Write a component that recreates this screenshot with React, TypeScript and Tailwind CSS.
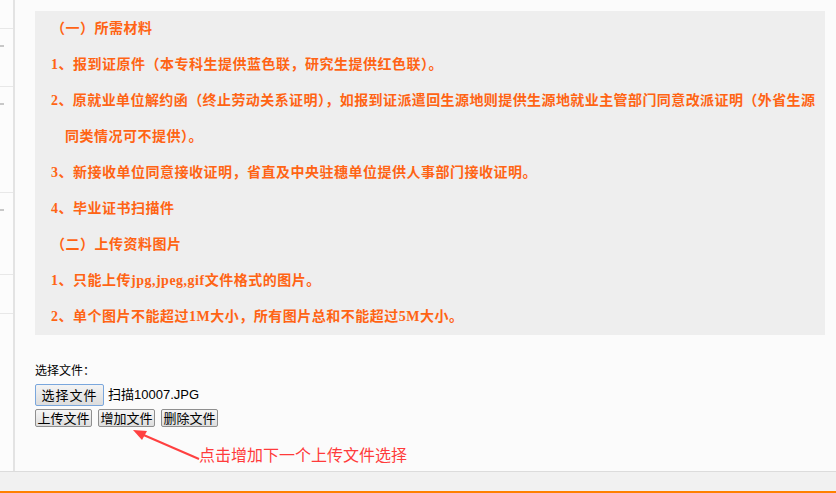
import React from 'react';

const sideRows = [
  { h: 'h-[29px]', tick: false },
  { h: 'h-[58px]', tick: true },
  { h: 'h-[106px]', tick: true },
  { h: 'h-[82px]', tick: true },
  { h: 'h-[39px]', tick: false },
];

// item 2 wraps onto a second line in the original layout
const notes: { text: string; cont?: string; heading?: boolean }[] = [
  { text: '（一）所需材料', heading: true },
  { text: '1、报到证原件（本专科生提供蓝色联，研究生提供红色联）。' },
  {
    text: '2、原就业单位解约函（终止劳动关系证明），如报到证派遣回生源地则提供生源地就业主管部门同意改派证明（外省生源',
    cont: '同类情况可不提供）。',
  },
  { text: '3、新接收单位同意接收证明，省直及中央驻穗单位提供人事部门接收证明。' },
  { text: '4、毕业证书扫描件' },
  { text: '（二）上传资料图片', heading: true },
  { text: '1、只能上传jpg,jpeg,gif文件格式的图片。' },
  { text: '2、单个图片不能超过1M大小，所有图片总和不能超过5M大小。' },
];

const Btn = ({ children }: { children: React.ReactNode }) => (
  <button
    type="button"
    className="h-[18px] w-[57px] border border-[#8f8f8f] rounded-[2px] bg-gradient-to-b from-[#f6f6f6] to-[#dedede] text-[13px] leading-[16px] text-black"
  >
    {children}
  </button>
);

export default function App() {
  return (
    <div className="w-[836px] h-[493px] flex flex-col bg-[#fbfbfb] overflow-hidden [font-family:'Noto_Sans_CJK_SC',sans-serif]">
      <div className="flex flex-1 min-h-0">
        <aside className="w-[15px] shrink-0 bg-[#fcfcfc] border-r-2 border-[#e3e3e3]">
          {sideRows.map((r, i) => (
            <div key={i} className={`${r.h} border-b border-[#e8e8e8] pt-[16px]`}>
              {r.tick && <div className="w-[4px] h-[2px] bg-[#c8c8c8]" />}
            </div>
          ))}
        </aside>

        <main className="flex-1 pl-[20px] pr-[11px] pt-[11px]">
          <div className="bg-[#eeeeee] pl-[16px] pr-[10px] text-[14px] leading-[36px] font-bold text-[#ff6414] [font-family:'Liberation_Serif','Noto_Sans_CJK_SC',serif]">
            {notes.map((n, i) =>
              n.cont ? (
                <div key={i}>
                  <p className="whitespace-nowrap text-justify [text-align-last:justify]">{n.text}</p>
                  <p className="pl-[14px] tracking-[0.5px]">{n.cont}</p>
                </div>
              ) : (
                <p key={i} className="tracking-[0.5px]">{n.text}</p>
              )
            )}
          </div>

          <div className="pt-[27px] text-[12px] leading-[16px] text-black">
            <div>选择文件：</div>
            <div className="flex items-center mt-[6px] h-[22px]">
              <button
                type="button"
                className="h-[22px] w-[69px] border border-[#7aa7dd] rounded-[2px] bg-gradient-to-b from-[#f4f4f4] to-[#dcdcdc] text-[13px] tracking-[1px] text-black"
              >
                选择文件
              </button>
              <span className="ml-[4px] text-[13px] [font-family:'Liberation_Sans','Noto_Sans_CJK_SC',sans-serif]">扫描10007.JPG</span>
            </div>
            <div className="flex gap-[6px] mt-[3px]">
              <Btn>上传文件</Btn>
              <Btn>增加文件</Btn>
              <Btn>删除文件</Btn>
            </div>
            <div className="flex items-center pl-[96px] mt-[1px]">
              <svg width="72" height="34" viewBox="0 0 72 34" className="shrink-0">
                <line x1="68" y1="30" x2="8" y2="4" stroke="#ff4040" strokeWidth="2" />
                <polygon points="2,1 16,2 11,11" fill="#ff4040" />
              </svg>
              <span className="mt-[16px] -ml-[4px] text-[16px] leading-[20px] text-[#ff3b3b]">点击增加下一个上传文件选择</span>
            </div>
          </div>
        </main>
      </div>

      <footer className="h-[22px] shrink-0 border-t border-[#dcdcdc] bg-[#f1f1f1] border-b-[2px] border-b-[#ff8000]" />
    </div>
  );
}
